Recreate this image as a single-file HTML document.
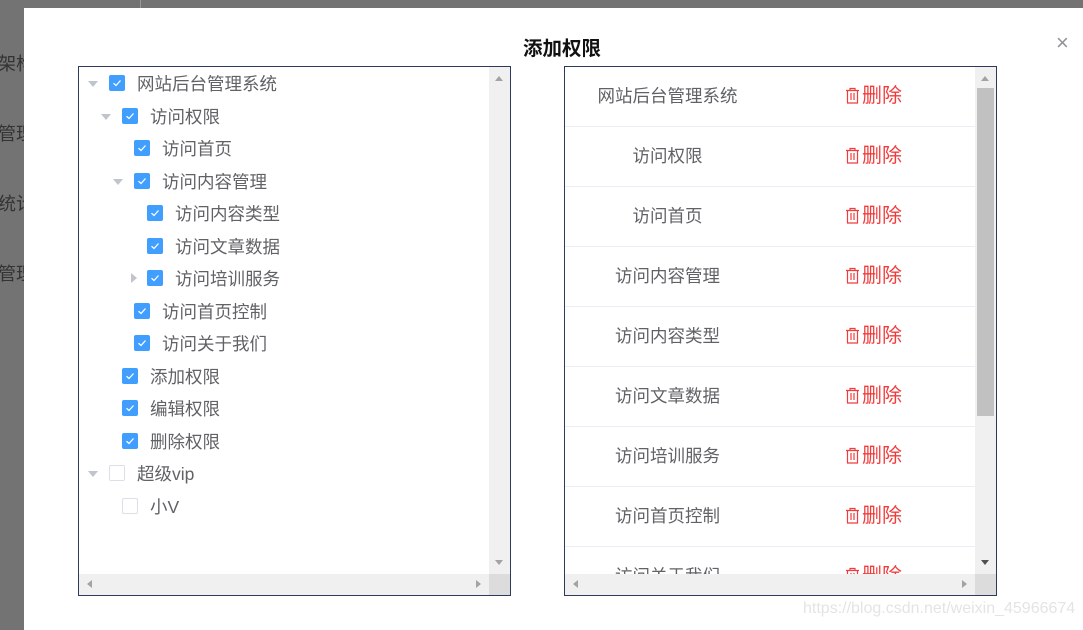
<!DOCTYPE html>
<html><head><meta charset="utf-8"><style>
*{margin:0;padding:0;box-sizing:border-box}
body{width:1083px;height:630px;overflow:hidden;background:#737373;position:relative;font-family:"Liberation Sans","Noto Sans CJK SC",sans-serif;color:#606266}
.abs{position:absolute}
.side{color:#333;font-size:18px;left:-2px;white-space:nowrap}
.dlg{left:24px;top:8px;width:1059px;height:622px;background:#fff}
.title{left:0;width:1124px;top:32px;text-align:center;font-size:19.5px;font-weight:bold;color:#111}
.box{border:1px solid #2c3a5c;background:#fff;overflow:hidden}
.vs{background:#f0f0f0}
.cb{width:16px;height:16px;border-radius:2px;background:#409eff}
.cb svg{display:block}
.cb.off{background:#fff;border:1px solid #dcdfe6}
.tx{font-size:17.5px;white-space:nowrap;line-height:20px}
.tri{width:0;height:0;border-left:5px solid transparent;border-right:5px solid transparent;border-top:6px solid #c0c4cc}
.trr{width:0;height:0;border-top:5px solid transparent;border-bottom:5px solid transparent;border-left:6px solid #c0c4cc}
.row{left:0;width:410px;height:60px;border-bottom:1px solid #ebeef5}
.row .n{position:absolute;left:0;width:205px;text-align:center;top:19px;font-size:17.5px;line-height:20px}
.row .d{position:absolute;left:280px;top:19px;font-size:20px;line-height:20px;color:#f23c3c;white-space:nowrap}
</style></head><body>
<div class="abs side" style="top:50px">架构</div>
<div class="abs side" style="top:120px">管理</div>
<div class="abs side" style="top:190px">统计</div>
<div class="abs side" style="top:260px">管理</div>
<div class="abs" style="left:140px;top:0;width:1px;height:8px;background:#999"></div>
<div class="abs dlg"></div>
<div class="abs title">添加权限</div>
<div class="abs" style="left:1056px;top:30px;font-size:22px;color:#909399;line-height:26px">×</div>

<div class="abs box" style="left:78px;top:66px;width:433px;height:530px">
  <div class="abs vs" style="left:410px;top:0;width:21px;height:507px"></div>
  <div class="abs vs" style="left:0;top:507px;width:410px;height:21px"></div>
  <div class="abs" style="left:410px;top:507px;width:21px;height:21px;background:#dcdcdc"></div>
  <div class="abs" style="left:416px;top:9px;border-left:4px solid transparent;border-right:4px solid transparent;border-bottom:5px solid #a3a3a3"></div>
  <div class="abs" style="left:416px;top:493px;border-left:4px solid transparent;border-right:4px solid transparent;border-top:5px solid #a3a3a3"></div>
  <div class="abs" style="left:8px;top:513px;border-top:4px solid transparent;border-bottom:4px solid transparent;border-right:5px solid #a3a3a3"></div>
  <div class="abs" style="left:397px;top:513px;border-top:4px solid transparent;border-bottom:4px solid transparent;border-left:5px solid #a3a3a3"></div>
</div>

<div id="tree"></div>

<div class="abs box" style="left:564px;top:66px;width:433px;height:530px">
  <div id="rows"></div>
  <div class="abs vs" style="left:410px;top:0;width:21px;height:507px"></div>
  <div class="abs" style="left:412px;top:21px;width:17px;height:328px;background:#c1c1c1"></div>
  <div class="abs vs" style="left:0;top:507px;width:410px;height:21px"></div>
  <div class="abs" style="left:410px;top:507px;width:21px;height:21px;background:#dcdcdc"></div>
  <div class="abs" style="left:416px;top:9px;border-left:4px solid transparent;border-right:4px solid transparent;border-bottom:5px solid #a3a3a3"></div>
  <div class="abs" style="left:416px;top:493px;border-left:4px solid transparent;border-right:4px solid transparent;border-top:5px solid #505050"></div>
  <div class="abs" style="left:8px;top:513px;border-top:4px solid transparent;border-bottom:4px solid transparent;border-right:5px solid #a3a3a3"></div>
  <div class="abs" style="left:397px;top:513px;border-top:4px solid transparent;border-bottom:4px solid transparent;border-left:5px solid #a3a3a3"></div>
</div>
<div class="abs" style="left:803px;top:600px;font-size:16px;color:#e4e4e4">https://blog.csdn.net/weixin_45966674</div>

<script>
var t=[[0,'网站后台管理系统','d',1],[1,'访问权限','d',1],[2,'访问首页','',1],[2,'访问内容管理','d',1],[3,'访问内容类型','',1],[3,'访问文章数据','',1],[3,'访问培训服务','r',1],[2,'访问首页控制','',1],[2,'访问关于我们','',1],[1,'添加权限','',1],[1,'编辑权限','',1],[1,'删除权限','',1],[0,'超级vip','d',0],[1,'小V','',0]];
var xs=[109,122,134,147],h='';
var ck='<svg width="16" height="16"><path d="M4.5 8.2 L7 10.5 L11.5 5.5" stroke="#fff" stroke-width="1.3" fill="none"/></svg>';
t.forEach(function(r,i){var y=83+i*32.5,x=xs[r[0]];
 if(r[2]=='d')h+='<div class="abs tri" style="left:'+(x-21)+'px;top:'+(y-2)+'px"></div>';
 if(r[2]=='r')h+='<div class="abs trr" style="left:'+(x-16)+'px;top:'+(y-5)+'px"></div>';
 h+='<div class="abs cb'+(r[3]?'':' off')+'" style="left:'+x+'px;top:'+(y-8)+'px">'+(r[3]?ck:'')+'</div>';
 h+='<div class="abs tx" style="left:'+(x+28)+'px;top:'+(y-9)+'px">'+r[1]+'</div>';});
document.getElementById('tree').innerHTML=h;
var n=['网站后台管理系统','访问权限','访问首页','访问内容管理','访问内容类型','访问文章数据','访问培训服务','访问首页控制','访问关于我们'],g='';
var bin='<svg width="15" height="17" style="vertical-align:-2px;margin-right:2px"><path d="M1 3.5H14M5 3.5V1.5H10V3.5M2.5 3.5V16H12.5V3.5M6 6V13M9 6V13" stroke="#f23c3c" stroke-width="1.2" fill="none"/></svg>';
n.forEach(function(s,i){g+='<div class="abs row" style="top:'+(i*60)+'px"><div class="n">'+s+'</div><div class="d">'+bin+'删除</div></div>';});
document.getElementById('rows').innerHTML=g;
</script>
</body></html>
